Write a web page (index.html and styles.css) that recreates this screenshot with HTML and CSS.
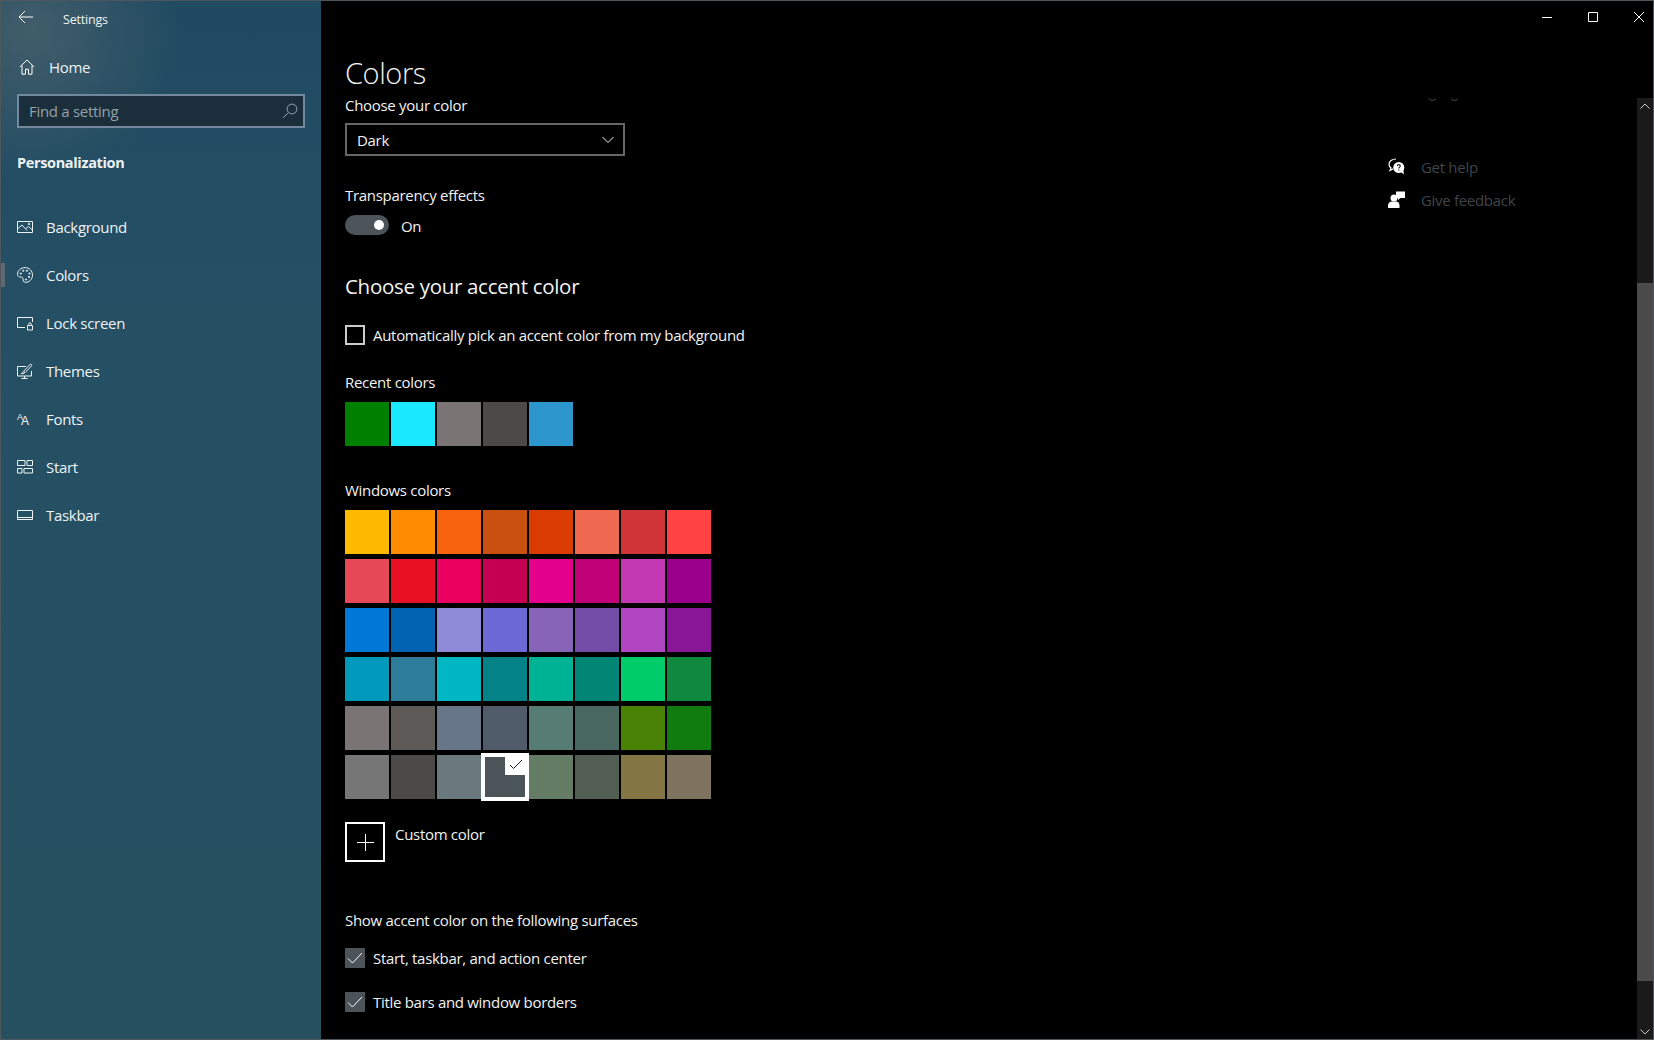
FILE: index.html
```html
<!DOCTYPE html>
<html lang="en">
<head>
<meta charset="utf-8">
<title>Settings</title>
<link rel="stylesheet" href="styles.css">
</head>
<body>
<div class="window">
  <aside class="sidebar">
    <div class="app-bar">
      <svg class="back" width="16" height="14" viewBox="0 0 16 14"><path d="M7 1 1 7l6 6M1 7h14" /></svg>
      <span class="app-title">Settings</span>
    </div>
    <div class="home nav-row">
      <svg class="icon" width="16" height="16" viewBox="0 0 16 16"><path d="M.8 8 8 1l7.2 7M3 6.5v8.7h3.500v-5h3v5H13V6.500"/></svg>
      <span>Home</span>
    </div>
    <div class="search">
      <span>Find a setting</span>
      <svg width="16" height="16" viewBox="0 0 16 16"><circle cx="10" cy="6" r="4.900"/><path d="M6.500 9.500 1 15"/></svg>
    </div>
    <div class="group-title">Personalization</div>
    <nav class="nav">
      <div class="nav-row">
        <svg class="icon" width="16" height="16" viewBox="0 0 16 16"><path d="M.5 2.500h15v11H.500zM.5 10 5 6l5 5.500M9 9.500l2.500-2 4 3.500"/><circle cx="12" cy="5" r=".8"/></svg>
        <span>Background</span>
      </div>
      <div class="nav-row active">
        <svg class="icon" width="16" height="16" viewBox="0 0 16 16"><path d="M8 .6C3.800.6.500 3.500.5 7.300c0 1.900 1.500 2.700 3 2.700 1.300 0 2.500.3 2.500 1.700 0 1.500.3 3.700 2.600 3.700 3.600 0 6.900-3 6.900-7.300C15.500 3.700 12.200.6 8 .6z"/><circle cx="3.800" cy="6.500" r=".7"/><circle cx="6.200" cy="3.700" r=".7"/><circle cx="10" cy="3.700" r=".7"/><circle cx="12.500" cy="6.500" r=".7"/><circle cx="12" cy="10" r=".7"/><circle cx="9" cy="12.500" r=".7"/></svg>
        <span>Colors</span>
      </div>
      <div class="nav-row">
        <svg class="icon" width="16" height="16" viewBox="0 0 16 16"><path d="M8 12.500H.5v-10h15V7M10.500 10.500h5v4.500h-5zM11.700 10.500V9.200a1.300 1.300 0 0 1 2.600 0v1.300"/></svg>
        <span>Lock screen</span>
      </div>
      <div class="nav-row">
        <svg class="icon" width="16" height="16" viewBox="0 0 16 16"><path d="M9 3.500H.5v9.500h14V8M7.500 13v2.500M4.500 15.500h6M4 10.500c1.800 0 2-1 2.500-2l1.500.8c-.3 1-1.500 1.700-4 1.200zM6.800 8l6.700-7 1.500 1.300-6.500 7"/></svg>
        <span>Themes</span>
      </div>
      <div class="nav-row">
        <span class="font-icon"><span class="fi-small">A</span><span class="fi-large">A</span></span>
        <span>Fonts</span>
      </div>
      <div class="nav-row">
        <svg class="icon" width="16" height="16" viewBox="0 0 16 16"><path d="M.5 1.500h7.500v5H.500zM10 1.500h5.500v5H10zM.5 9.500h4.500v4.500H.500zM7 9.500h8.500v4.500H7z"/></svg>
        <span>Start</span>
      </div>
      <div class="nav-row">
        <svg class="icon" width="16" height="16" viewBox="0 0 16 16"><path d="M.5 3.500h15v9H.500zM.5 10.500h15"/></svg>
        <span>Taskbar</span>
      </div>
    </nav>
  </aside>

  <main class="main">
    <div class="captions">
      <svg width="12" height="12" viewBox="0 0 12 12"><path d="M1 6.500h10"/></svg>
      <svg width="12" height="12" viewBox="0 0 12 12"><path d="M1.500 1.500h9v9h-9z"/></svg>
      <svg width="12" height="12" viewBox="0 0 12 12"><path d="m1 1 10 10M11 1 1 11"/></svg>
    </div>

    <section class="content">
      <h1 class="page-title">Colors</h1>
      <div class="label label-first">Choose your color</div>
      <div class="dropdown">
        <span>Dark</span>
        <svg width="12" height="8" viewBox="0 0 12 8"><path d="m.5 1 5.500 5.500L11.500 1"/></svg>
      </div>
      <div class="label label-transparency">Transparency effects</div>
      <div class="toggle-row">
        <span class="toggle"><span class="knob"></span></span>
        <span>On</span>
      </div>
      <h2 class="section-title">Choose your accent color</h2>
      <div class="check-row check-auto">
        <span class="check"></span>
        <span>Automatically pick an accent color from my background</span>
      </div>
      <div class="label label-recent">Recent colors</div>
      <div class="swatches recent">
        <span class="swatch" style="background:#008000"></span>
        <span class="swatch" style="background:#1be9ff"></span>
        <span class="swatch" style="background:#7a7574"></span>
        <span class="swatch" style="background:#4c4a48"></span>
        <span class="swatch" style="background:#2d96cc"></span>
      </div>
      <div class="label label-windows">Windows colors</div>
      <div class="swatches palette">
        <span class="swatch" style="background:#ffb900"></span>
        <span class="swatch" style="background:#ff8c00"></span>
        <span class="swatch" style="background:#f7630c"></span>
        <span class="swatch" style="background:#ca5010"></span>
        <span class="swatch" style="background:#da3b01"></span>
        <span class="swatch" style="background:#ef6950"></span>
        <span class="swatch" style="background:#d13438"></span>
        <span class="swatch" style="background:#ff4343"></span>
        <span class="swatch" style="background:#e74856"></span>
        <span class="swatch" style="background:#e81123"></span>
        <span class="swatch" style="background:#ea005e"></span>
        <span class="swatch" style="background:#c30052"></span>
        <span class="swatch" style="background:#e3008c"></span>
        <span class="swatch" style="background:#bf0077"></span>
        <span class="swatch" style="background:#c239b3"></span>
        <span class="swatch" style="background:#9a0089"></span>
        <span class="swatch" style="background:#0078d7"></span>
        <span class="swatch" style="background:#0063b1"></span>
        <span class="swatch" style="background:#8e8cd8"></span>
        <span class="swatch" style="background:#6b69d6"></span>
        <span class="swatch" style="background:#8764b8"></span>
        <span class="swatch" style="background:#744da9"></span>
        <span class="swatch" style="background:#b146c2"></span>
        <span class="swatch" style="background:#881798"></span>
        <span class="swatch" style="background:#0099bc"></span>
        <span class="swatch" style="background:#2d7d9a"></span>
        <span class="swatch" style="background:#00b7c3"></span>
        <span class="swatch" style="background:#038387"></span>
        <span class="swatch" style="background:#00b294"></span>
        <span class="swatch" style="background:#018574"></span>
        <span class="swatch" style="background:#00cc6a"></span>
        <span class="swatch" style="background:#10893e"></span>
        <span class="swatch" style="background:#7a7574"></span>
        <span class="swatch" style="background:#5d5a58"></span>
        <span class="swatch" style="background:#68768a"></span>
        <span class="swatch" style="background:#515c6b"></span>
        <span class="swatch" style="background:#567c73"></span>
        <span class="swatch" style="background:#486860"></span>
        <span class="swatch" style="background:#498205"></span>
        <span class="swatch" style="background:#107c10"></span>
        <span class="swatch" style="background:#767676"></span>
        <span class="swatch" style="background:#4c4a48"></span>
        <span class="swatch" style="background:#69797e"></span>
        <span class="swatch selected" style="background:#4a5459">
          <span class="selected-mark"><svg width="14" height="11" viewBox="0 0 14 11"><path d="m1 6 3.500 3.500L13 1"/></svg></span>
        </span>
        <span class="swatch" style="background:#647c64"></span>
        <span class="swatch" style="background:#525e54"></span>
        <span class="swatch" style="background:#847545"></span>
        <span class="swatch" style="background:#7e735f"></span>
      </div>
      <div class="custom">
        <span class="custom-box"><svg width="17" height="17" viewBox="0 0 17 17"><path d="M8.500 0v17M0 8.500h17"/></svg></span>
        <span class="custom-label">Custom color</span>
      </div>
      <div class="label label-surfaces">Show accent color on the following surfaces</div>
      <div class="check-row check-start">
        <span class="check on"><svg width="16" height="12" viewBox="0 0 16 12"><path d="m1 6.500 4.500 4.500L15 1"/></svg></span>
        <span>Start, taskbar, and action center</span>
      </div>
      <div class="check-row check-title">
        <span class="check on"><svg width="16" height="12" viewBox="0 0 16 12"><path d="m1 6.500 4.500 4.500L15 1"/></svg></span>
        <span>Title bars and window borders</span>
      </div>
    </section>

    <section class="related">
      <svg class="clipped" width="60" height="4" viewBox="0 0 60 4"><path d="M1 .5c1.500 2.500 5 2.500 7 0M23 .5c1.500 2.500 5 2.500 7 0"/></svg>
      <div class="help-row">
        <svg width="17" height="17" viewBox="0 0 17 17"><path class="help-line" d="M8 1C4 1 1 3.300 1 6.200c0 1.500.8 2.800 2 3.700L2 12.500l3.300-1.700"/><circle class="help-fill" cx="10.800" cy="9.500" r="5.500"/><path class="help-fill" d="m13 14 3 2.500-.6-4z"/><path class="help-mark" d="M9.300 8c0-1.800 3-1.800 3 0 0 1.200-1.500 1.100-1.500 2.500M10.800 11.500v1"/></svg>
        <span>Get help</span>
      </div>
      <div class="help-row">
        <svg width="17" height="17" viewBox="0 0 17 17"><circle class="help-fill" cx="6" cy="7" r="3.500"/><path class="help-fill" d="M0 17v-2.500C0 12 2 10.500 4 10.500h4c2 0 3.500 1.500 3.500 4V17z"/><path class="help-fill" d="M8 .5h9v6.500h-4.500L10 9V7H8z"/></svg>
        <span>Give feedback</span>
      </div>
    </section>

    <div class="scrollbar">
      <svg class="arrow-up" width="10" height="6" viewBox="0 0 10 6"><path d="m.5 5.500L5 1l4.500 4.500"/></svg>
      <span class="thumb"></span>
      <svg class="arrow-down" width="10" height="6" viewBox="0 0 10 6"><path d="m.5.500L5 5 9.500.500"/></svg>
    </div>
  </main>
</div>
</body>
</html>
```

FILE: styles.css
```css
* { box-sizing: border-box; }
html, body { margin: 0; height: 100%; background: #000; }
body {
  font-family: "Open Sans", "Noto Sans", "Liberation Sans", sans-serif;
  font-size: 15px;
  line-height: 20px;
  color: #f2f2f2;
  overflow: hidden;
}
svg { display: block; flex: none; fill: none; stroke: currentColor; stroke-width: 1; }

.window {
  display: flex;
  width: 1654px;
  height: 1040px;
  border: 1px solid #4c565c;
  background: #000;
}

/* Sidebar */
.sidebar {
  width: 320px;
  flex: none;
  padding-left: 16px;
  color: #eef2f4;
  letter-spacing: -0.3px;
  background:
    radial-gradient(circle at 30px 30px, rgba(105, 115, 115, 0.45), rgba(105, 115, 115, 0) 150px),
    linear-gradient(180deg, #204a62 0, #255064 35%, #26505f 100%);
}
.app-bar { display: flex; height: 39px; position: relative; }
.back { margin: 9px 0 0 1px; stroke: #fff; }
.app-title { margin: 9px 0 0 29px; font-size: 12.500px; letter-spacing: -0.2px; }
.nav-row { display: flex; align-items: center; height: 48px; gap: 13px; position: relative; }
.nav-row .icon { margin-left: 0; }
.home { margin-top: 9px; height: 36px; gap: 14px; margin-left: 2px; }
.home .icon { stroke: #fff; }
.search {
  display: flex;
  align-items: center;
  justify-content: space-between;
  width: 288px;
  height: 34px;
  margin-top: 9px;
  padding: 0 5px 0 10px;
  border: 2px solid #71899a;
  background: #1a2f3b;
  color: #95a1a8;
}
.group-title { margin-top: 25px; font-weight: 700; font-size: 14.500px; letter-spacing: -0.35px; }
.nav { margin-top: 30px; }
.active::before {
  content: "";
  position: absolute;
  left: -16px;
  top: 12px;
  width: 4px;
  height: 24px;
  background: #5d6870;
}
.font-icon { display: flex; align-items: flex-end; width: 16px; height: 16px; font-family: "Liberation Sans", sans-serif; letter-spacing: 0; }
.fi-small { font-size: 9px; line-height: 12px; align-self: flex-start; }
.fi-large { font-size: 12px; line-height: 12px; margin-left: -2px; }

/* Main */
.main { flex: 1; display: flex; position: relative; min-width: 0; letter-spacing: -0.3px; }
.captions {
  position: absolute;
  right: 0;
  top: 0;
  display: flex;
  gap: 34px;
  padding: 10px 8px 0 0;
  color: #fff;
}
.content { width: 1043px; flex: none; padding: 53px 0 0 24px; }
.page-title { margin: 0; font-size: 29px; line-height: 38px; font-weight: 300; letter-spacing: -0.4px; }
.section-title { margin: 37px 0 0; font-size: 20.500px; line-height: 28px; font-weight: 400; letter-spacing: -0.3px; }
.label { margin: 0; }
.label-first { margin-top: 3px; }
.label-transparency { margin-top: 29px; }
.label-recent { margin-top: 27px; }
.label-windows { margin-top: 34px; }
.label-surfaces { margin-top: 48px; }
.dropdown {
  display: flex;
  align-items: center;
  justify-content: space-between;
  width: 280px;
  height: 33px;
  margin-top: 8px;
  padding: 0 9px 0 10px;
  border: 2px solid #666;
}
.toggle-row { display: flex; align-items: center; gap: 12px; height: 20px; margin-top: 10px; }
.toggle-row > span:last-child { position: relative; top: 1px; }
.toggle { display: flex; align-items: center; justify-content: flex-end; width: 44px; height: 20px; padding-right: 5px; border-radius: 10px; background: #4c5359; }
.knob { width: 10px; height: 10px; border-radius: 50%; background: #fff; }
.check-row { display: flex; align-items: center; gap: 8px; height: 20px; }
.check-auto { margin-top: 25px; }
.check-start { margin-top: 18px; }
.check-title { margin-top: 24px; }
.check { display: flex; align-items: center; justify-content: center; width: 20px; height: 20px; flex: none; border: 2px solid #ccc; color: #fff; }
.check.on { border: 0; background: #4c5359; }
.swatches { display: grid; grid-template-columns: repeat(8, 44px); column-gap: 2px; row-gap: 5px; margin-top: 10px; }
.swatch { display: block; height: 44px; }
.selected { position: relative; outline: 2px solid #fff; outline-offset: 0; box-shadow: 0 0 0 2px #fff inset; }
.selected-mark {
  position: absolute;
  right: 0;
  top: -2px;
  width: 22px;
  height: 22px;
  display: flex;
  align-items: center;
  justify-content: center;
  background: #fff;
  color: #222;
}
.custom { display: flex; gap: 10px; margin-top: 23px; }
.custom-box { display: flex; align-items: center; justify-content: center; width: 40px; height: 40px; border: 2px solid #fff; color: #fff; }
.custom-label { margin-top: 2px; }

/* Related */
.related { position: relative; padding: 149px 0 0 24px; color: #3f4549; }
.clipped { position: absolute; left: 64px; top: 97px; color: #555; }
.help-row { display: flex; align-items: center; gap: 16px; height: 33px; letter-spacing: -0.3px; }
.help-row svg { color: #fff; }
.help-fill { fill: #fff; stroke: none; }
.help-line { stroke: #fff; stroke-width: 1.200; }
.help-mark { stroke: #222; stroke-width: 1.200; }

/* Scrollbar */
.scrollbar {
  position: absolute;
  right: 0;
  top: 97px;
  bottom: 0;
  width: 16px;
  background: #1a1a1a;
  color: #ccc;
}
.arrow-up { position: absolute; left: 3px; top: 5px; }
.arrow-down { position: absolute; left: 3px; bottom: 4px; }
.thumb { position: absolute; left: 0; right: 0; top: 185px; height: 698px; background: #4a4a4a; }
```
